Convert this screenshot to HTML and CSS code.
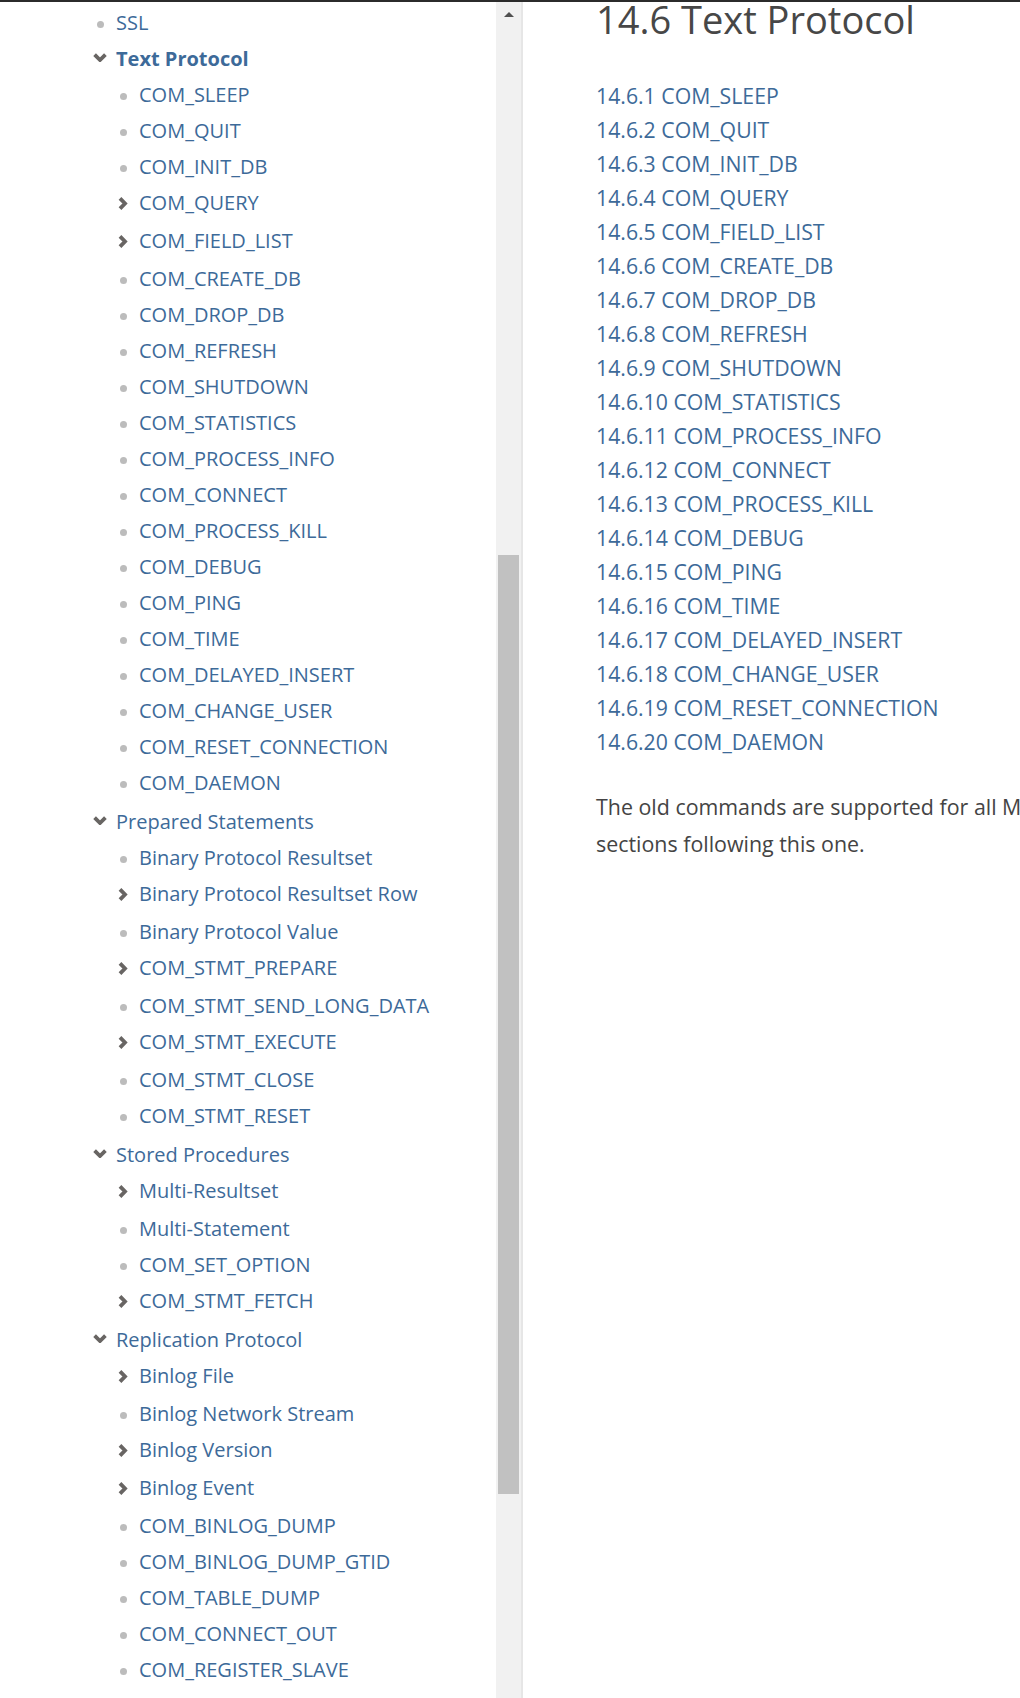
FILE: index.html
```html
<!DOCTYPE html>
<html lang="en">
<head>
<meta charset="utf-8">
<title>14.6 Text Protocol</title>
<link rel="stylesheet" href="styles.css">
</head>
<body>
<div class="topbar"></div>
<div class="page">
  <nav class="sidebar">
    <ul class="toc">
      <li class="leaf"><div class="row"><span class="icon"><span class="dot"></span></span><a class="link">SSL</a></div></li>
      <li class="open"><div class="row"><span class="icon"><svg class="chev-down" width="14" height="9" viewBox="0 0 14 9"><path d="M1.6 1.6 L7 7 L12.4 1.6"/></svg></span><a class="link current">Text Protocol</a></div>
        <ul class="sub">
          <li class="leaf"><div class="row"><span class="icon"><span class="dot"></span></span><a class="link">COM_SLEEP</a></div></li>
          <li class="leaf"><div class="row"><span class="icon"><span class="dot"></span></span><a class="link">COM_QUIT</a></div></li>
          <li class="leaf"><div class="row"><span class="icon"><span class="dot"></span></span><a class="link">COM_INIT_DB</a></div></li>
          <li class="closed"><div class="row"><span class="icon"><svg class="chev-right" width="14" height="13" viewBox="0 0 14 13"><path d="M4 1.4 L9 6.5 L4 11.6"/></svg></span><a class="link">COM_QUERY</a></div></li>
          <li class="closed"><div class="row"><span class="icon"><svg class="chev-right" width="14" height="13" viewBox="0 0 14 13"><path d="M4 1.4 L9 6.5 L4 11.6"/></svg></span><a class="link">COM_FIELD_LIST</a></div></li>
          <li class="leaf"><div class="row"><span class="icon"><span class="dot"></span></span><a class="link">COM_CREATE_DB</a></div></li>
          <li class="leaf"><div class="row"><span class="icon"><span class="dot"></span></span><a class="link">COM_DROP_DB</a></div></li>
          <li class="leaf"><div class="row"><span class="icon"><span class="dot"></span></span><a class="link">COM_REFRESH</a></div></li>
          <li class="leaf"><div class="row"><span class="icon"><span class="dot"></span></span><a class="link">COM_SHUTDOWN</a></div></li>
          <li class="leaf"><div class="row"><span class="icon"><span class="dot"></span></span><a class="link">COM_STATISTICS</a></div></li>
          <li class="leaf"><div class="row"><span class="icon"><span class="dot"></span></span><a class="link">COM_PROCESS_INFO</a></div></li>
          <li class="leaf"><div class="row"><span class="icon"><span class="dot"></span></span><a class="link">COM_CONNECT</a></div></li>
          <li class="leaf"><div class="row"><span class="icon"><span class="dot"></span></span><a class="link">COM_PROCESS_KILL</a></div></li>
          <li class="leaf"><div class="row"><span class="icon"><span class="dot"></span></span><a class="link">COM_DEBUG</a></div></li>
          <li class="leaf"><div class="row"><span class="icon"><span class="dot"></span></span><a class="link">COM_PING</a></div></li>
          <li class="leaf"><div class="row"><span class="icon"><span class="dot"></span></span><a class="link">COM_TIME</a></div></li>
          <li class="leaf"><div class="row"><span class="icon"><span class="dot"></span></span><a class="link">COM_DELAYED_INSERT</a></div></li>
          <li class="leaf"><div class="row"><span class="icon"><span class="dot"></span></span><a class="link">COM_CHANGE_USER</a></div></li>
          <li class="leaf"><div class="row"><span class="icon"><span class="dot"></span></span><a class="link">COM_RESET_CONNECTION</a></div></li>
          <li class="leaf"><div class="row"><span class="icon"><span class="dot"></span></span><a class="link">COM_DAEMON</a></div></li>
        </ul>
      </li>
      <li class="open"><div class="row"><span class="icon"><svg class="chev-down" width="14" height="9" viewBox="0 0 14 9"><path d="M1.6 1.6 L7 7 L12.4 1.6"/></svg></span><a class="link">Prepared Statements</a></div>
        <ul class="sub">
          <li class="leaf"><div class="row"><span class="icon"><span class="dot"></span></span><a class="link">Binary Protocol Resultset</a></div></li>
          <li class="closed"><div class="row"><span class="icon"><svg class="chev-right" width="14" height="13" viewBox="0 0 14 13"><path d="M4 1.4 L9 6.5 L4 11.6"/></svg></span><a class="link">Binary Protocol Resultset Row</a></div></li>
          <li class="leaf"><div class="row"><span class="icon"><span class="dot"></span></span><a class="link">Binary Protocol Value</a></div></li>
          <li class="closed"><div class="row"><span class="icon"><svg class="chev-right" width="14" height="13" viewBox="0 0 14 13"><path d="M4 1.4 L9 6.5 L4 11.6"/></svg></span><a class="link">COM_STMT_PREPARE</a></div></li>
          <li class="leaf"><div class="row"><span class="icon"><span class="dot"></span></span><a class="link">COM_STMT_SEND_LONG_DATA</a></div></li>
          <li class="closed"><div class="row"><span class="icon"><svg class="chev-right" width="14" height="13" viewBox="0 0 14 13"><path d="M4 1.4 L9 6.5 L4 11.6"/></svg></span><a class="link">COM_STMT_EXECUTE</a></div></li>
          <li class="leaf"><div class="row"><span class="icon"><span class="dot"></span></span><a class="link">COM_STMT_CLOSE</a></div></li>
          <li class="leaf"><div class="row"><span class="icon"><span class="dot"></span></span><a class="link">COM_STMT_RESET</a></div></li>
        </ul>
      </li>
      <li class="open"><div class="row"><span class="icon"><svg class="chev-down" width="14" height="9" viewBox="0 0 14 9"><path d="M1.6 1.6 L7 7 L12.4 1.6"/></svg></span><a class="link">Stored Procedures</a></div>
        <ul class="sub">
          <li class="closed"><div class="row"><span class="icon"><svg class="chev-right" width="14" height="13" viewBox="0 0 14 13"><path d="M4 1.4 L9 6.5 L4 11.6"/></svg></span><a class="link">Multi-Resultset</a></div></li>
          <li class="leaf"><div class="row"><span class="icon"><span class="dot"></span></span><a class="link">Multi-Statement</a></div></li>
          <li class="leaf"><div class="row"><span class="icon"><span class="dot"></span></span><a class="link">COM_SET_OPTION</a></div></li>
          <li class="closed"><div class="row"><span class="icon"><svg class="chev-right" width="14" height="13" viewBox="0 0 14 13"><path d="M4 1.4 L9 6.5 L4 11.6"/></svg></span><a class="link">COM_STMT_FETCH</a></div></li>
        </ul>
      </li>
      <li class="open"><div class="row"><span class="icon"><svg class="chev-down" width="14" height="9" viewBox="0 0 14 9"><path d="M1.6 1.6 L7 7 L12.4 1.6"/></svg></span><a class="link">Replication Protocol</a></div>
        <ul class="sub">
          <li class="closed"><div class="row"><span class="icon"><svg class="chev-right" width="14" height="13" viewBox="0 0 14 13"><path d="M4 1.4 L9 6.5 L4 11.6"/></svg></span><a class="link">Binlog File</a></div></li>
          <li class="leaf"><div class="row"><span class="icon"><span class="dot"></span></span><a class="link">Binlog Network Stream</a></div></li>
          <li class="closed"><div class="row"><span class="icon"><svg class="chev-right" width="14" height="13" viewBox="0 0 14 13"><path d="M4 1.4 L9 6.5 L4 11.6"/></svg></span><a class="link">Binlog Version</a></div></li>
          <li class="closed"><div class="row"><span class="icon"><svg class="chev-right" width="14" height="13" viewBox="0 0 14 13"><path d="M4 1.4 L9 6.5 L4 11.6"/></svg></span><a class="link">Binlog Event</a></div></li>
          <li class="leaf"><div class="row"><span class="icon"><span class="dot"></span></span><a class="link">COM_BINLOG_DUMP</a></div></li>
          <li class="leaf"><div class="row"><span class="icon"><span class="dot"></span></span><a class="link">COM_BINLOG_DUMP_GTID</a></div></li>
          <li class="leaf"><div class="row"><span class="icon"><span class="dot"></span></span><a class="link">COM_TABLE_DUMP</a></div></li>
          <li class="leaf"><div class="row"><span class="icon"><span class="dot"></span></span><a class="link">COM_CONNECT_OUT</a></div></li>
          <li class="leaf"><div class="row"><span class="icon"><span class="dot"></span></span><a class="link">COM_REGISTER_SLAVE</a></div></li>
        </ul>
      </li>
    </ul>
  </nav>
  <div class="scrollbar">
    <span class="scroll-arrow"></span>
    <span class="scroll-thumb"></span>
  </div>
  <main class="main">
    <h1 class="title">14.6 Text Protocol</h1>
    <ul class="contents">
      <li><a class="link">14.6.1 COM_SLEEP</a></li>
      <li><a class="link">14.6.2 COM_QUIT</a></li>
      <li><a class="link">14.6.3 COM_INIT_DB</a></li>
      <li><a class="link">14.6.4 COM_QUERY</a></li>
      <li><a class="link">14.6.5 COM_FIELD_LIST</a></li>
      <li><a class="link">14.6.6 COM_CREATE_DB</a></li>
      <li><a class="link">14.6.7 COM_DROP_DB</a></li>
      <li><a class="link">14.6.8 COM_REFRESH</a></li>
      <li><a class="link">14.6.9 COM_SHUTDOWN</a></li>
      <li><a class="link">14.6.10 COM_STATISTICS</a></li>
      <li><a class="link">14.6.11 COM_PROCESS_INFO</a></li>
      <li><a class="link">14.6.12 COM_CONNECT</a></li>
      <li><a class="link">14.6.13 COM_PROCESS_KILL</a></li>
      <li><a class="link">14.6.14 COM_DEBUG</a></li>
      <li><a class="link">14.6.15 COM_PING</a></li>
      <li><a class="link">14.6.16 COM_TIME</a></li>
      <li><a class="link">14.6.17 COM_DELAYED_INSERT</a></li>
      <li><a class="link">14.6.18 COM_CHANGE_USER</a></li>
      <li><a class="link">14.6.19 COM_RESET_CONNECTION</a></li>
      <li><a class="link">14.6.20 COM_DAEMON</a></li>
    </ul>
    <p class="text">The old commands are supported for all MySQL Server versions. The newer commands are described in the<br>sections following this one.</p>
  </main>
</div>
</body>
</html>
```

FILE: styles.css
```css
html, body {
  margin: 0;
  padding: 0;
  height: 100%;
  overflow: hidden;
  background: #ffffff;
}

body {
  font-family: "Open Sans", "Noto Sans", "Liberation Sans", sans-serif;
  color: #444444;
  display: flex;
  flex-direction: column;
}

.topbar {
  height: 2px;
  flex: none;
  background: #2b2b2b;
}

.page {
  flex: 1;
  display: flex;
  min-height: 0;
}

/* ---------- sidebar ---------- */
.sidebar {
  width: 496px;
  flex: none;
  overflow: hidden;
  padding-top: 3px;
  box-sizing: border-box;
}

.toc,
.sub {
  list-style: none;
  margin: 0;
  padding: 0;
}

.toc {
  padding-left: 93px;
}

.sub {
  padding-left: 23px;
  margin-bottom: 3px;
}

.closed {
  margin-bottom: 2px;
}

.row {
  display: flex;
  align-items: center;
  height: 36px;
}

.icon {
  width: 23px;
  flex: none;
  display: flex;
  align-items: center;
}

.dot {
  width: 7px;
  height: 7px;
  margin-left: 4px;
  margin-top: 2px;
  border-radius: 50%;
  background: #bcbcbc;
}

.chev-down,
.chev-right {
  display: block;
  fill: none;
  stroke: #686563;
  stroke-width: 3.8;
  stroke-linejoin: miter;
  stroke-linecap: butt;
}

.chev-down {
  margin-top: -3px;
}

.chev-right {
  margin-top: 1px;
}

.link {
  font-size: 20px;
  line-height: 36px;
  color: #3d6a99;
  text-decoration: none;
  white-space: nowrap;
}

.current {
  font-weight: 700;
}

/* ---------- fake scrollbar ---------- */
.scrollbar {
  width: 25px;
  flex: none;
  background: #f1f1f1;
  border-right: 2px solid #e6e6e6;
  display: flex;
  flex-direction: column;
  align-items: center;
}

.scroll-arrow {
  margin-top: 10px;
  width: 0;
  height: 0;
  border-left: 5.5px solid transparent;
  border-right: 5.5px solid transparent;
  border-bottom: 5px solid #505050;
}

.scroll-thumb {
  margin-top: 538px;
  width: 21px;
  height: 939px;
  background: #c1c1c1;
}

/* ---------- main ---------- */
.main {
  flex: 1;
  min-width: 0;
  overflow: hidden;
  padding-left: 73px;
}

.title {
  margin: -4px 0 38px;
  font-size: 38px;
  line-height: 43px;
  font-weight: 400;
  color: #474747;
  white-space: nowrap;
}

.contents {
  list-style: none;
  margin: 0 0 30px;
  padding: 0;
  font-size: 21.25px;
  line-height: 34px;
}

.contents li {
  height: 34px;
}

.contents .link {
  font-size: 21.25px;
  line-height: 34px;
}

.text {
  margin: 0;
  font-size: 21.4px;
  line-height: 36.5px;
  color: #444444;
  white-space: nowrap;
}
```
